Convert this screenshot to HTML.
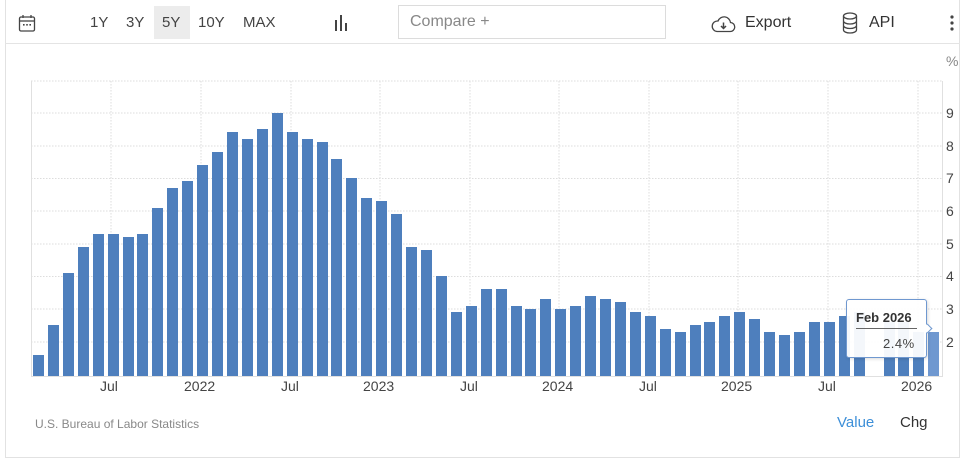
<!DOCTYPE html>
<html><head><meta charset="utf-8"><style>
*{margin:0;padding:0;box-sizing:border-box}
body{width:974px;height:459px;background:#fff;font-family:"Liberation Sans",sans-serif;position:relative;overflow:hidden;color:#333}
.frame{position:absolute;left:5px;top:-2px;width:955px;height:460px;border:1px solid #e2e2e2}
.hdr{position:absolute;left:5px;top:43px;width:955px;border-top:1px solid #e4e4e4}
.tb{position:absolute;top:14px;font-size:15px;color:#444}
.bars{position:absolute;left:33px;top:0;height:376px;display:flex;align-items:flex-end;gap:3.93px}
.bars div{width:11px;background:#4e7fbd;height:calc((var(--v) - 1.05)*32.7px)}
.lbl{position:absolute;font-size:14px;color:#444}
.yl{position:absolute;left:946px;font-size:14px;color:#444}
</style></head><body>
<div class="frame"></div>
<div class="hdr"></div>
<svg style="position:absolute;left:18px;top:14px" width="18" height="19" viewBox="0 0 18 19"><rect x="1.5" y="3" width="15" height="14" rx="1.5" fill="none" stroke="#444" stroke-width="1.3"/><line x1="1.5" y1="7" x2="16.5" y2="7" stroke="#444" stroke-width="1.3"/><line x1="5" y1="1" x2="5" y2="4" stroke="#444" stroke-width="1.3"/><line x1="13" y1="1" x2="13" y2="4" stroke="#444" stroke-width="1.3"/><rect x="5" y="10" width="1.6" height="1.6" fill="#444"/><rect x="8.2" y="10" width="1.6" height="1.6" fill="#444"/><rect x="11.4" y="10" width="1.6" height="1.6" fill="#444"/></svg>
<div style="position:absolute;left:154px;top:6px;width:36px;height:33px;background:#ececec"></div>
<div class="tb" style="left:90px">1Y</div>
<div class="tb" style="left:126px">3Y</div>
<div class="tb" style="left:162px">5Y</div>
<div class="tb" style="left:198px">10Y</div>
<div class="tb" style="left:243px">MAX</div>
<svg style="position:absolute;left:334px;top:15px" width="14" height="16"><rect x="1" y="5" width="2" height="11" fill="#444"/><rect x="6" y="0" width="2" height="16" fill="#444"/><rect x="11" y="8" width="2" height="8" fill="#444"/></svg>
<div style="position:absolute;left:398px;top:5px;width:268px;height:34px;border:1px solid #dcdcdc"></div>
<div class="tb" style="left:410px;top:13px;color:#888;font-size:16px">Compare +</div>
<svg style="position:absolute;left:711px;top:15px" width="25" height="18" viewBox="0 0 25 18"><path d="M6 16.5H19a4.5 4.5 0 0 0 .5-9A6.5 6.5 0 0 0 7 6 5 5 0 0 0 6 16.5Z" fill="none" stroke="#444" stroke-width="1.3"/><path d="M12.5 7.5v6M10 11l2.5 2.5L15 11" fill="none" stroke="#444" stroke-width="1.5"/></svg>
<div class="tb" style="left:745px;top:14px;font-size:16px;color:#333">Export</div>
<svg style="position:absolute;left:842px;top:12px" width="16" height="22" viewBox="0 0 16 22"><ellipse cx="8" cy="4" rx="6.5" ry="3" fill="none" stroke="#444" stroke-width="1.3"/><path d="M1.5 4v14c0 1.7 2.9 3 6.5 3s6.5-1.3 6.5-3V4M1.5 9c0 1.7 2.9 3 6.5 3s6.5-1.3 6.5-3M1.5 13.5c0 1.7 2.9 3 6.5 3s6.5-1.3 6.5-3" fill="none" stroke="#444" stroke-width="1.3"/></svg>
<div class="tb" style="left:869px;top:14px;font-size:16px;color:#333">API</div>
<svg style="position:absolute;left:950px;top:15px" width="4" height="16"><circle cx="2" cy="2" r="1.6" fill="#444"/><circle cx="2" cy="8" r="1.6" fill="#444"/><circle cx="2" cy="14" r="1.6" fill="#444"/></svg>

<svg style="position:absolute;left:0;top:0" width="974" height="459">
<g stroke="#ddd" stroke-dasharray="1.5,1.5" stroke-width="1">
<line x1="31" y1="81" x2="942" y2="81"/><line x1="31" y1="113" x2="942" y2="113"/><line x1="31" y1="146" x2="942" y2="146"/><line x1="31" y1="178.5" x2="942" y2="178.5"/><line x1="31" y1="211" x2="942" y2="211"/><line x1="31" y1="244" x2="942" y2="244"/><line x1="31" y1="276.5" x2="942" y2="276.5"/><line x1="31" y1="309" x2="942" y2="309"/><line x1="31" y1="342" x2="942" y2="342"/>
<line x1="111" y1="81" x2="111" y2="376"/><line x1="201" y1="81" x2="201" y2="376"/><line x1="291" y1="81" x2="291" y2="376"/><line x1="380" y1="81" x2="380" y2="376"/><line x1="470" y1="81" x2="470" y2="376"/><line x1="559" y1="81" x2="559" y2="376"/><line x1="649" y1="81" x2="649" y2="376"/><line x1="738" y1="81" x2="738" y2="376"/><line x1="828" y1="81" x2="828" y2="376"/><line x1="918" y1="81" x2="918" y2="376"/>
</g>
<line x1="31.5" y1="81" x2="31.5" y2="377" stroke="#e0e0e0"/>
<line x1="942.5" y1="81" x2="942.5" y2="377" stroke="#e0e0e0"/>
<line x1="31" y1="376.5" x2="942" y2="376.5" stroke="#e0e0e0"/>
</svg>
<div class="bars">
<div style="--v:1.7"></div><div style="--v:2.6"></div><div style="--v:4.2"></div><div style="--v:5.0"></div><div style="--v:5.4"></div><div style="--v:5.4"></div><div style="--v:5.3"></div><div style="--v:5.4"></div><div style="--v:6.2"></div><div style="--v:6.8"></div><div style="--v:7.0"></div>
<div style="--v:7.5"></div><div style="--v:7.9"></div><div style="--v:8.5"></div><div style="--v:8.3"></div><div style="--v:8.6"></div><div style="--v:9.1"></div><div style="--v:8.5"></div><div style="--v:8.3"></div><div style="--v:8.2"></div><div style="--v:7.7"></div><div style="--v:7.1"></div><div style="--v:6.5"></div>
<div style="--v:6.4"></div><div style="--v:6.0"></div><div style="--v:5.0"></div><div style="--v:4.9"></div><div style="--v:4.1"></div><div style="--v:3.0"></div><div style="--v:3.2"></div><div style="--v:3.7"></div><div style="--v:3.7"></div><div style="--v:3.2"></div><div style="--v:3.1"></div><div style="--v:3.4"></div>
<div style="--v:3.1"></div><div style="--v:3.2"></div><div style="--v:3.5"></div><div style="--v:3.4"></div><div style="--v:3.3"></div><div style="--v:3.0"></div><div style="--v:2.9"></div><div style="--v:2.5"></div><div style="--v:2.4"></div><div style="--v:2.6"></div><div style="--v:2.7"></div><div style="--v:2.9"></div>
<div style="--v:3.0"></div><div style="--v:2.8"></div><div style="--v:2.4"></div><div style="--v:2.3"></div><div style="--v:2.4"></div><div style="--v:2.7"></div><div style="--v:2.7"></div><div style="--v:2.9"></div><div style="--v:3.0"></div><div style="--v:1.05"></div><div style="--v:2.7"></div><div style="--v:2.7"></div><div style="--v:2.4"></div><div style="--v:2.4;background:#6f98d0"></div>
</div>
<div class="yl" style="top:53px;color:#888">%</div>
<div class="yl" style="top:105px">9</div><div class="yl" style="top:138px">8</div><div class="yl" style="top:170px">7</div><div class="yl" style="top:203px">6</div><div class="yl" style="top:236px">5</div><div class="yl" style="top:268px">4</div><div class="yl" style="top:301px">3</div><div class="yl" style="top:334px">2</div>
<div class="lbl" style="left:100px;top:378px">Jul</div>
<div class="lbl" style="left:184px;top:378px">2022</div>
<div class="lbl" style="left:281px;top:378px">Jul</div>
<div class="lbl" style="left:363px;top:378px">2023</div>
<div class="lbl" style="left:460px;top:378px">Jul</div>
<div class="lbl" style="left:542px;top:378px">2024</div>
<div class="lbl" style="left:639px;top:378px">Jul</div>
<div class="lbl" style="left:721px;top:378px">2025</div>
<div class="lbl" style="left:818px;top:378px">Jul</div>
<div class="lbl" style="left:901px;top:378px">2026</div>
<div style="position:absolute;left:846px;top:299px;width:81px;height:59px;background:rgba(255,255,255,.94);border:1px solid #6f98d0;border-radius:3px;box-shadow:1px 1px 3px rgba(0,0,0,.15)"></div>
<div style="position:absolute;left:924px;top:325px;width:7px;height:7px;background:#fff;border-right:1px solid #6f98d0;border-top:1px solid #6f98d0;transform:rotate(45deg)"></div>
<div style="position:absolute;left:856px;top:310px;font-size:13px;font-weight:bold;color:#333">Feb 2026</div>
<div style="position:absolute;left:856px;top:328px;width:61px;border-top:1px solid #666"></div>
<div style="position:absolute;left:883px;top:336px;font-size:13px;color:#444;letter-spacing:.5px">2.4%</div>
<div style="position:absolute;left:35px;top:417px;font-size:12px;color:#888">U.S. Bureau of Labor Statistics</div>
<div style="position:absolute;left:837px;top:414px;font-size:15px;color:#3d8fd8">Value</div>
<div style="position:absolute;left:900px;top:414px;font-size:15px;color:#333">Chg</div>
</body></html>
